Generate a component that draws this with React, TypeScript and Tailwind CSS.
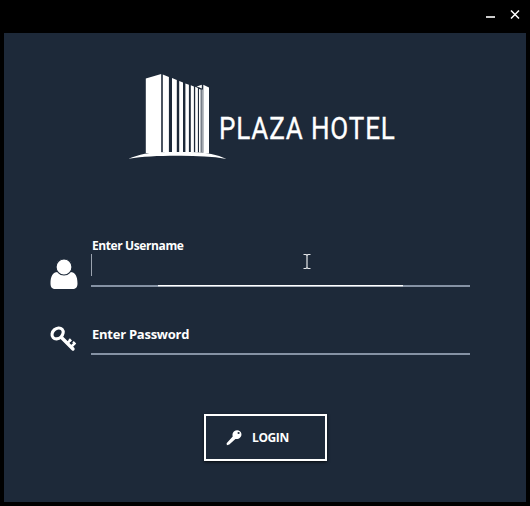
function HotelLogo() {
  return (
    <div className="flex" role="img" aria-label="Plaza Hotel">
      <svg className="shrink-0" width="99" height="100" viewBox="128 65 99 100" fill="#fff">
        <path d="M145.8 78.6 L161.2 74 V153 H145.8Z" />
        <path d="M162.8 74.4 L168.9 76.9 V152 H162.8Z" />
        <path d="M172 78 L176.8 80 V152 H172Z" />
        <path d="M179.2 81 L183 82.6 V152 H179.2Z" />
        <path d="M185.4 83.4 L188.9 84.8 V152 H185.4Z" />
        <path d="M190.8 85.2 L193.9 86.4 V152.5 H190.8Z" />
        <path d="M195.2 86.8 L197.9 88 V152.5 H195.2Z" />
        <path d="M199 89 L200.7 89.4 V152.5 H199Z" />
        <path d="M201.6 89.4 H202.6 V152.5 H201.6Z" />
        <path d="M196.5 86.6 L201.8 84.8 V88.4 L199 87.2Z" />
        <path d="M203.3 84.8 L209 87.4 V153.5 H203.3Z" />
        <path d="M128.5 158.8 C139 154.4 149 152.2 166 152 H191 C207 152.3 217 154.5 226.5 159 C211 156.2 195 155.7 177 155.8 C157 155.8 143 156.5 128.5 158.8Z" />
      </svg>
      <span className="-ml-2 mt-[44px] block h-10 origin-left scale-x-[0.84] whitespace-nowrap font-[Roboto,sans-serif] text-[31px] leading-10 tracking-[1px] [-webkit-text-stroke:0.3px_white]">PLAZA HOTEL</span>
    </div>
  );
}

function UserIcon() {
  return (
    <svg className="shrink-0" width="28" height="32" viewBox="50 258 28 32">
      <path d="M58 272 C53 271.8 50.5 276 50.5 283.5 C50.5 287.3 52.2 289 55.5 289 H72.5 C75.8 289 77.5 287.3 77.5 283.5 C77.5 276 75 271.8 70 272Z" fill="#fff" />
      <circle cx="64" cy="267" r="8" fill="#fff" stroke="#1d2939" strokeWidth="1.2" />
    </svg>
  );
}

function OldKeyIcon() {
  return (
    <svg className="shrink-0" width="28" height="28" viewBox="50 326 28 28" fill="none" stroke="#fff">
      <ellipse cx="57.6" cy="334.4" rx="6.1" ry="4.9" strokeWidth="3.1" transform="rotate(-42 57.6 334.4)" />
      <path d="M61.5 338.5 L73 350" strokeWidth="3.4" strokeLinecap="round" />
      <path d="M67.2 344.3 L70.3 341.2 M71 348 L74.4 344.6" strokeWidth="2.6" />
      <path d="M69.2 340 L71.3 342.1 M73 342.8 L75.5 345.3" strokeWidth="2" />
    </svg>
  );
}

function LoginKeyIcon() {
  return (
    <svg width="16" height="17" viewBox="226 429 16 17">
      <path d="M234.2 431.3 C236.8 429 241 430.4 241.4 433.8 C241.8 437.4 238.7 439.6 235.4 439 L229.3 444.6 L226.9 445.2 L226.6 443.2 L232.7 436.4 C232.1 434.4 232.7 432.6 234.2 431.3Z" fill="#fff" />
      <circle cx="238.6" cy="433" r="1.1" fill="#1d2939" />
    </svg>
  );
}

export default function App() {
  return (
    <div className="relative flex h-[506px] w-[530px] flex-col bg-black px-1 pb-1 font-['Open_Sans','Noto_Sans',sans-serif] text-white">
      <header className="flex h-[33px] shrink-0 items-start justify-end gap-[15px] pr-[6px] pt-[9px]">
        <button aria-label="Minimize" className="h-[11px] w-[9px]">
          <svg width="9" height="11"><path d="M0 8H9" stroke="#fff" strokeWidth="1.6" /></svg>
        </button>
        <button aria-label="Close" className="h-[11px] w-[10px]">
          <svg width="10" height="11"><path d="M1 1.5L9 9.5M9 1.5L1 9.5" stroke="#fff" strokeWidth="1.5" /></svg>
        </button>
      </header>
      <main className="flex flex-1 flex-col bg-[#1d2939]">
        <div className="ml-[124px] mt-8 h-[100px]"><HotelLogo /></div>
        <div className="ml-[46px] mt-[71px] flex h-[51px] items-end gap-[13px]">
          <div className="-mb-[3px]"><UserIcon /></div>
          <div className="flex h-[51px] w-[379px] flex-col">
            <label className="ml-px h-[18px] whitespace-nowrap text-[12px] font-bold leading-[19px] tracking-[-0.4px]">Enter Username</label>
            <div className="h-[22px] w-px bg-[#9ba3af]" />
            <div className="mt-[9px] flex h-[2px] bg-[#8592a4]">
              <div className="ml-[67px] h-[2px] w-[245px] border-t border-white bg-[#a9b2be]" />
            </div>
          </div>
        </div>
        <div className="ml-[46px] mt-[38px] flex h-[30px] gap-[13px]">
          <OldKeyIcon />
          <div className="h-[30px] w-[379px] border-b-2 border-[#8592a4]">
            <label className="ml-px block whitespace-nowrap text-[13px] font-bold leading-[18px] tracking-[-0.25px]">Enter Password</label>
          </div>
        </div>
        <button className="ml-[200px] mt-[59px] flex h-[47px] w-[123px] items-center gap-[10px] border-2 border-white pl-[20px] shadow-sm shadow-black/60">
          <LoginKeyIcon />
          <span className="text-[12px] font-bold leading-[18px] tracking-[-0.4px]">LOGIN</span>
        </button>
      </main>
      <svg className="pointer-events-none absolute left-[303px] top-[253px]" width="8" height="17" viewBox="0 0 8 17">
        <path d="M.5 1.5H3L4 2.5L5 1.5H7.5M4 2.5V14.5M.5 15.5H3L4 14.5L5 15.5H7.5" fill="none" stroke="#e4e6e9" strokeWidth="1.2" />
      </svg>
    </div>
  );
}
